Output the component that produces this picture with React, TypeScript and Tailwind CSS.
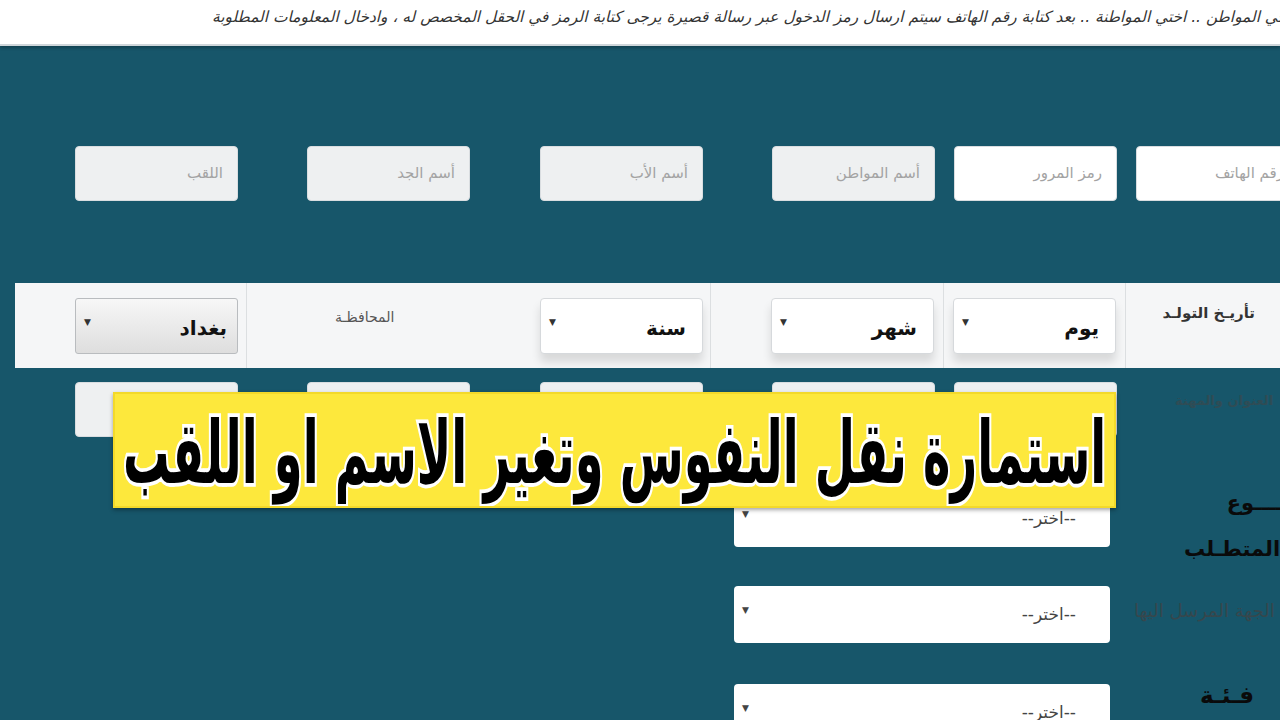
const row1 = [
  { ph: "اللقب", ml: "ml-[75px]", filled: true },
  { ph: "أسم الجد", ml: "ml-[69px]", filled: true },
  { ph: "أسم الأب", ml: "ml-[70px]", filled: true },
  { ph: "أسم المواطن", ml: "ml-[69px]", filled: true },
  { ph: "رمز المرور", ml: "ml-[19px]", filled: false },
  { ph: "رقم الهاتف", ml: "ml-[19px]", filled: false },
];

function Field({ ph, filled, className }: { ph: string; filled: boolean; className: string }) {
  return (
    <div
      className={`${className} h-[55px] w-[163px] shrink-0 rounded-[4px] border border-[#d9dde0] flex items-center justify-end pr-[14px] text-[15px] text-[#a3a3a3] ${
        filled ? "bg-[#eef0f1]" : "bg-white"
      }`}
    >
      {ph}
    </div>
  );
}

function DateSelect({ label, className }: { label: string; className: string }) {
  return (
    <div
      className={`${className} h-[56px] w-[163px] shrink-0 rounded-[4px] border border-[#d6d9dc] bg-white shadow-[0_8px_10px_rgba(0,0,0,0.12)] flex items-center justify-between pl-[8px] pr-[16px]`}
    >
      <span className="text-[9px] text-[#333] -mt-[6px]">▼</span>
      <span className="text-[20px] font-bold text-[#111] mt-[4px]">{label}</span>
    </div>
  );
}

function ChooseSelect({ className }: { className: string }) {
  return (
    <div
      className={`${className} h-[57px] w-[376px] shrink-0 rounded-[4px] bg-white flex items-center justify-between pl-[8px] pr-[34px]`}
    >
      <span className="text-[9px] text-[#444] -mt-[8px]">▼</span>
      <span className="text-[17px] text-[#444]">--اختر--</span>
    </div>
  );
}

export default function App() {
  return (
    <div className="relative w-[1280px] h-[720px] overflow-hidden bg-[#17566a] font-['DejaVu_Sans',sans-serif]">
      {/* header notice */}
      <div className="h-[46px] bg-white border-b-2 border-[#cfd6da] shadow-[0_2px_3px_rgba(0,0,0,0.25)] overflow-hidden">
        <p className="pl-[212px] pt-[6px] whitespace-nowrap italic text-[15.4px] text-[#333]">
          أخي المواطن .. اختي المواطنة .. بعد كتابة رقم الهاتف سيتم ارسال رمز الدخول عبر رسالة قصيرة يرجى كتابة الرمز في الحقل المخصص له ، وادخال المعلومات المطلوبة
        </p>
      </div>

      {/* name row */}
      <div className="flex mt-[100px]">
        {row1.map((f) => (
          <Field key={f.ph} ph={f.ph} filled={f.filled} className={f.ml} />
        ))}
      </div>

      {/* birth date row */}
      <div className="ml-[15px] mt-[82px] h-[85px] bg-[#f5f6f7] flex items-center">
        <div className="w-[232px] h-full flex items-center pl-[60px] border-r border-[#dcdfe1]">
          <div className="h-[56px] w-[163px] rounded-[3px] border border-[#b9bcbf] bg-gradient-to-b from-[#f7f7f7] to-[#dedede] flex items-center justify-between pl-[8px] pr-[10px]">
            <span className="text-[9px] text-[#333] -mt-[6px]">▼</span>
            <span className="text-[20px] font-bold text-[#111] mt-[4px]">بغداد</span>
          </div>
        </div>
        <div className="w-[464px] h-full flex border-r border-[#dcdfe1]">
          <div className="w-[278px] pt-[22px] pl-[88px]">
            <span className="text-[14px] text-[#555]">المحافظـة</span>
          </div>
          <div className="flex items-center">
            <DateSelect label="سنة" className="ml-[15px]" />
          </div>
        </div>
        <div className="w-[233px] h-full flex items-center border-r border-[#dcdfe1]">
          <DateSelect label="شهر" className="ml-[60px]" />
        </div>
        <div className="w-[182px] h-full flex items-center border-r border-[#dcdfe1]">
          <DateSelect label="يوم" className="ml-[9px]" />
        </div>
        <div className="flex-1 h-full pt-[19px] flex justify-end pr-[25px]">
          <span className="text-[15px] font-bold text-[#333]">تأريـخ التولـد</span>
        </div>
      </div>

      {/* address row (mostly under the banner) */}
      <div className="flex mt-[14px] items-center">
        <Field ph="" filled className="ml-[75px]" />
        <Field ph="" filled className="ml-[69px]" />
        <Field ph="" filled className="ml-[70px]" />
        <Field ph="" filled className="ml-[69px]" />
        <Field ph="" filled className="ml-[19px]" />
        <span className="ml-[58px] -mt-[18px] whitespace-nowrap text-[13px] text-[#2f4c55] font-bold">العنوان والمهنة</span>
      </div>

      {/* request rows */}
      <div className="flex items-start h-[57px] mt-[53px]">
        <ChooseSelect className="ml-[734px]" />
        <div className="ml-[74px] -mt-[10px] text-[21px] font-bold text-[#0a0a0a] leading-[46px] text-right w-[90px] whitespace-nowrap">
          <div className="-mr-[24px]">نـــــوع</div>
          <div>المتطـلب</div>
        </div>
      </div>
      <div className="flex items-start h-[57px] mt-[39px]">
        <ChooseSelect className="ml-[734px]" />
        <span className="ml-[24px] mt-[11px] whitespace-nowrap text-[18px] text-[#36474d]">الجهة المرسل اليها</span>
      </div>
      <div className="flex items-start h-[57px] mt-[41px]">
        <ChooseSelect className="ml-[734px]" />
        <span className="ml-[90px] -mt-[6px] text-[23px] font-bold text-[#0a0a0a]">فـئـة</span>
      </div>

      {/* title banner overlay */}
      <div className="absolute left-[113px] top-[392px] w-[1003px] h-[116px] bg-[#fde83c] border-[2px] border-[#f3d92a] shadow-[0_2px_4px_rgba(0,0,0,0.35)] flex items-center justify-center overflow-hidden">
        <span
          dir="rtl"
          className="whitespace-nowrap font-bold text-black text-[58px] leading-none scale-x-[0.8] scale-y-[1.5] mt-[6px] [-webkit-text-stroke:5px_white] [paint-order:stroke_fill]"
        >
          استمارة نقل النفوس وتغير الاسم او اللقب
        </span>
      </div>
    </div>
  );
}
